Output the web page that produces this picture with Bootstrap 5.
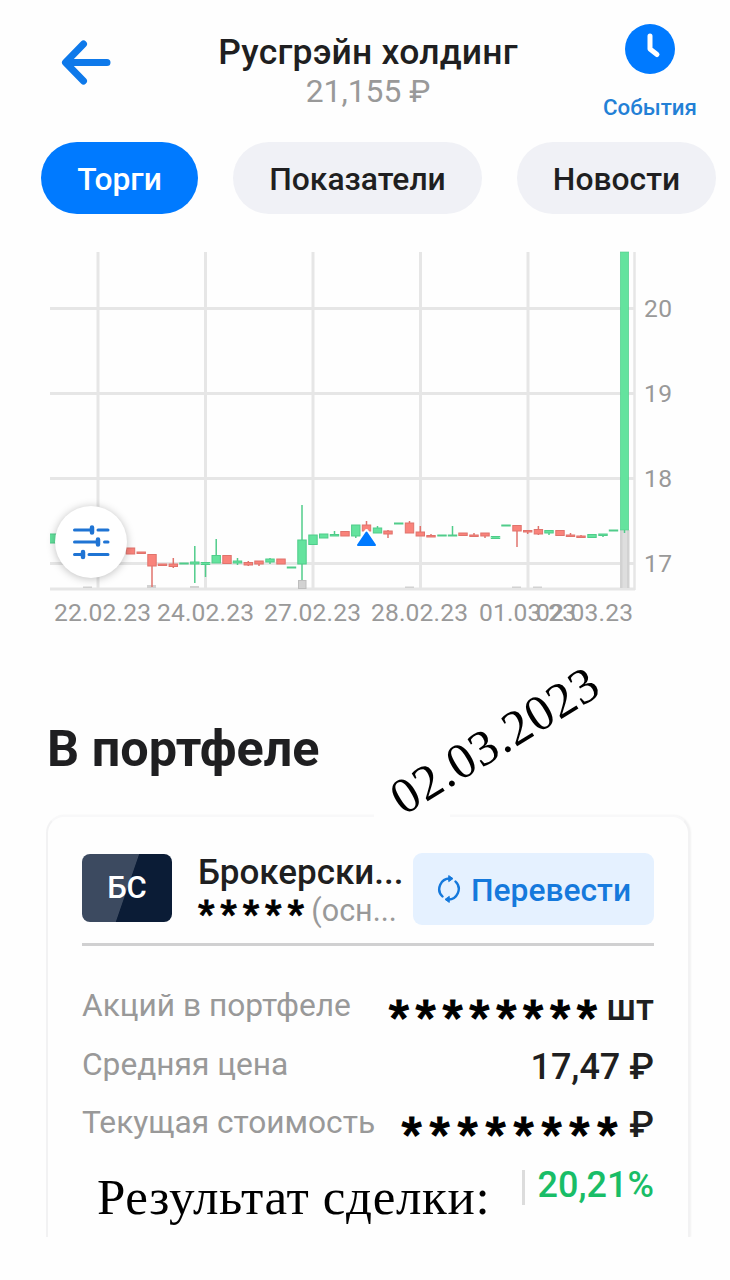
<!DOCTYPE html>
<html lang="ru">
<head>
<meta charset="utf-8">
<meta name="viewport" content="width=device-width, initial-scale=1">
<title>Русгрэйн холдинг</title>
<link href="https://cdn.jsdelivr.net/npm/bootstrap@5.3.0/dist/css/bootstrap.min.css" rel="stylesheet">
<style>
  body { font-family: Roboto, "Liberation Sans", sans-serif; color: #1f1f21; background: #fefefe; height: 1280px; overflow: hidden; }
  .topbar { height: 142px; padding: 0 33px 0 61px; }
  .back-icon { margin-top: 39px; width: 50px; height: 46px; }
  .heading-box { width: 320px; margin-top: 31px; margin-left: 22px; }
  .page-title { font-size: 35.5px; line-height: 42px; font-weight: 500; letter-spacing: .2px; }
  .page-price { font-size: 31.8px; line-height: 36px; color: #999; }
  .events { width: 94px; margin-top: 24px; color: #2380d6; }
  .events span { font-size: 22.3px; line-height: 28px; margin-top: 19px; font-weight: 500; }
  .tabs { padding-left: 41px; gap: 35px; height: 72px; }
  .pill { height: 72px; font-size: 31.8px; font-weight: 500; padding: 4px 0 0; background: #f0f1f6; color: #1f1f21; border: 0; }
  .pill.active { background: #007aff; color: #fff; }
  .pill-a { width: 157px; } .pill-b { width: 249px; } .pill-c { width: 199px; }
  .chart-box { margin: 36px 0 0 50px; width: 640px; height: 380px; }
  .filter-btn { left: 5px; top: 256px; width: 72px; height: 72px; box-shadow: 0 1px 8px rgba(0,0,0,.25); padding: 0; }
  .section-title { font-size: 50.4px; line-height: 60px; font-weight: 700; margin: 89px 0 0 47px; }
  .stamp { font-family: "Liberation Serif", serif; font-size: 50px; line-height: 51px; letter-spacing: 1px; color: #000; left: 375px; top: 715px; width: 240px; transform: rotate(-31.6deg); }
  .card-gap { left: 374px; top: 812px; width: 76px; height: 6px; background: #fefefe; }
  .holding { margin: 36px 40px 0 46px; height: 422px; border: 2px solid #f2f2f3; border-top-color: #f8f8f9; border-bottom: 0; border-radius: 18px 18px 0 0; box-shadow: 1px 0 2px rgba(0,0,0,.05); background: #fefefe; padding: 36px 34px 0 34px; clip-path: inset(-5px -5px 0 -5px); }
  .account { height: 93px; border-bottom: 3px solid #d0d0d1; }
  .logo { width: 90px; height: 68px; border-radius: 8px; margin-top: 1px; font-size: 31px; color: #fff; background: linear-gradient(109deg, #3c4a60 0 50%, #0b1c36 50.8%); font-weight: 500; }
  .acc-text { width: 215px; margin-left: 26px; }
  .acc-name { font-size: 35px; line-height: 40px; font-weight: 500; }
  .acc-sub { font-size: 30.5px; line-height: 36px; color: #999; }
  .stars { color: #000; font-weight: 700; font-size: 44px; line-height: 0; letter-spacing: 6.9px; vertical-align: -12px; margin-right: -6px; -webkit-text-stroke: 1.2px #000; stroke-linejoin: round; }
  .stars-wide { letter-spacing: 8px; margin-right: -5px; }
  .stars-small { font-size: 36px; letter-spacing: 6px; vertical-align: -5px; -webkit-text-stroke-width: .8px; }
  .transfer { width: 241px; height: 72px; border: 0; border-radius: 9px; background: #e5f1ff; color: #1579dc; font-size: 31.8px; font-weight: 500; padding: 0; gap: 9px; }
  .transfer span { padding-top: 3px; }
  .line { height: 58.5px; }
  .lines { padding-top: 31px; }
  .lbl { font-size: 31.7px; color: #999; }
  .val { font-size: 36px; font-weight: 500; padding-top: 4px; }
  .result { font-family: "Liberation Serif", serif; font-size: 51px; line-height: 60px; letter-spacing: .65px; color: #000; margin: 14px 0 0 15px; }
  .gain { color: #19bd67; font-size: 36px; line-height: 42px; font-weight: 500; margin-top: 11px; }
  .sep { width: 3px; height: 35px; background: #dcdcdc; margin: 17px 13px 0 auto; }
</style>
</head>
<body class="position-relative">
<header class="topbar d-flex justify-content-between align-items-start">
  <svg class="back-icon" viewBox="0 0 50 46" fill="none" stroke="#0e79ea" stroke-width="7" stroke-linecap="round" stroke-linejoin="round"><path d="M22.500 5L4.500 23.500L22.500 42M5 23.500H46"/></svg>
  <div class="heading-box text-center text-nowrap">
    <div class="page-title">Русгрэйн холдинг</div>
    <div class="page-price">21,155 ₽</div>
  </div>
  <div class="events d-flex flex-column align-items-center">
    <svg width="50" height="50" viewBox="0 0 50 50"><circle cx="25" cy="25" r="25" fill="#007aff"/><path d="M25 12V25L32 30.500" fill="none" stroke="#fff" stroke-width="5" stroke-linecap="round" stroke-linejoin="round"/></svg>
    <span>События</span>
  </div>
</header>
<nav class="tabs d-flex text-nowrap">
  <button class="btn rounded-pill pill pill-a active flex-shrink-0">Торги</button>
  <button class="btn rounded-pill pill pill-b flex-shrink-0">Показатели</button>
  <button class="btn rounded-pill pill pill-c flex-shrink-0">Новости</button>
</nav>
<section class="chart-box position-relative">
  <svg id="chart" class="d-block" width="640" height="380" viewBox="50 250 640 380" font-family="Roboto, sans-serif" font-size="24.600" fill="#999">
    <g stroke="#e6e6e6" stroke-width="3">
      <path d="M98 252V588M205.500 252V588M313 252V588M420.500 252V588M528 252V588M50 308.500H635M50 393.500H635M50 478.500H635M50 563.500H635M50 589H635"/>
      <path d="M634.500 252V590" stroke-width="2.500"/>
    </g>
    <g fill="#d2d2d2">
      <path d="M147 585h9v3h-9zM190 586h9v2h-9zM83 586.500h9v1.500h-9zM405 586.500h9v1.500h-9zM512 586.500h9v1.500h-9zM533 586.500h9v1.500h-9z"/>
      <rect x="298.500" y="580.500" width="7.500" height="8" stroke="#bebebe"/>
      <rect x="620" y="530" width="9.500" height="58"/><rect x="622.500" y="530" width="4.500" height="58" fill="#dedede"/>
    </g>
    <g id="candles"></g>
    <path d="M366.500 531L376 545.500H357Z" fill="#fff" stroke="#fff" stroke-width="4" stroke-linejoin="round"/>
    <path d="M366.500 532.500L375 545H358Z" fill="#007aff" stroke="#007aff" stroke-width="2" stroke-linejoin="round"/>
    <g>
      <text x="644" y="317" textLength="28">20</text><text x="644" y="402" textLength="28">19</text><text x="644" y="487" textLength="28">18</text><text x="644" y="572" textLength="28">17</text>
      <text x="54" y="621" textLength="97">22.02.23</text><text x="157" y="621" textLength="97">24.02.23</text><text x="264" y="621" textLength="97">27.02.23</text><text x="371" y="621" textLength="97">28.02.23</text><text x="479" y="621" textLength="97">01.03.23</text><text x="536" y="621" textLength="97">02.03.23</text>
    </g>
  </svg>
  <button class="filter-btn btn bg-white rounded-circle position-absolute d-flex align-items-center justify-content-center">
    <svg width="38" height="36" viewBox="0 0 38 36" fill="none" stroke="#1f74d4" stroke-width="3" stroke-linecap="round"><path d="M2.500 6H19M26 6H36M2.500 18H25M32.500 18H36M2.500 30.500H10M17 30.500H36"/><path d="M20 3.500V8.500M26 15.500V20.500M11 28V33" stroke-width="4.500"/></svg>
  </button>
</section>
<h2 class="section-title">В портфеле</h2>
<section class="holding">
  <div class="account d-flex align-items-start text-nowrap">
    <div class="logo d-flex align-items-center justify-content-center flex-shrink-0">БС</div>
    <div class="acc-text flex-shrink-0">
      <div class="acc-name">Брокерски...</div>
      <div class="acc-sub"><span class="stars stars-small">*****</span> (осн...</div>
    </div>
    <button class="btn transfer d-flex align-items-center justify-content-center flex-shrink-0">
      <svg width="26" height="28" viewBox="0 0 26 28" fill="none" stroke="#1579dc" stroke-width="2.400" stroke-linecap="round"><path d="M6.500 21.500A10.500 10.500 0 0 1 14.500 3.500M19.500 6.500A10.500 10.500 0 0 1 11.500 24.500"/><path d="M13 .8L17 3.600L13 6.400ZM13 21.600L9 24.400L13 27.200Z" fill="#1579dc" stroke-width="1"/></svg>
      <span>Перевести</span>
    </button>
  </div>
  <div class="lines text-nowrap">
    <div class="line d-flex justify-content-between align-items-center"><span class="lbl">Акций в портфеле</span><span class="val"><span class="stars">********</span> шт</span></div>
    <div class="line d-flex justify-content-between align-items-center"><span class="lbl">Средняя цена</span><span class="val">17,47 ₽</span></div>
    <div class="line d-flex justify-content-between align-items-center"><span class="lbl">Текущая стоимость</span><span class="val"><span class="stars stars-wide">********</span> ₽</span></div>
    <div class="d-flex align-items-start">
      <span class="result">Результат сделки:</span>
      <span class="sep"></span><span class="gain">20,21%</span>
    </div>
  </div>
</section>
<div class="card-gap position-absolute"></div>
<div class="stamp position-absolute text-center text-nowrap">02.03.2023</div>
<script src="https://cdn.jsdelivr.net/npm/bootstrap@5.3.0/dist/js/bootstrap.bundle.min.js"></script>
<script>
  // colour, centre x, body top, body bottom, wick top, wick bottom
  const data = [
    ['g',53,534,543],['r',130.5,548,554],['r',141.2,552,553.5],['r',152,554.5,566,554,587],['r',162.5,564,565.5],['r',173.3,564,566.5,558,568],['g',184,563,564],
    ['g',194.8,562,564,546,583],['g',205.5,562.5,564.5,562,577],['g',216.2,555.5,563,539,563],['r',227,555.5,563.5],['g',237.5,561,563,558,565],['r',248.3,562.5,565,561,566],
    ['r',259,561,564,561,566],['g',270,559,562,558,564],['r',281,559,564],['g',291.5,567,568],['g',302,540,564,505,580],['g',313,535,544.5],['g',323.7,534,538],
    ['g',334.5,534.5,536,531,536],['r',345,531.5,536],['g',355.8,525,536,525,538],['r',366.5,525,531,521,531],['g',377.5,528,533,526,533],['r',388,531,534,530,538],['g',398.7,523,524],
    ['r',409.5,523,533,521,533],['r',420.3,532,536,526,536],['r',431,535.5,537,534,537],['g',442,535,536],['g',452.5,535,536,526,536],['r',463,533,535.5],['r',474,535,536.5,533,536],
    ['r',485,533,536,533,538],['g',495.5,536.5,538.5],['g',506,525,526],['r',517,525.5,531,525,547],['r',527.7,530.5,532,530,534],['r',538.4,529.5,534,526,535],['g',549,530.5,533,530,535],
    ['r',560,530.5,535.5],['r',570.5,535,536.5,533,537],['r',581,536,537.5,535,538],['g',592,534.5,537.5],['g',603,534,535.5,534,537],['g',613.5,530,531],['g',624.5,252,530,252,533]
  ];
  const tone = { g: ['#64e39e', '#50cc8a'], r: ['#f9837b', '#e0736c'] };
  document.getElementById('candles').innerHTML = data.map(([c, x, a, b, t, w]) => {
    const [f, s] = tone[c];
    const wick = t ? `<path d="M${x} ${t}V${w}" stroke="${s}" stroke-width="1.5"/>` : '';
    return wick + `<rect x="${x - 4.2}" y="${a}" width="8.400" height="${b - a}" fill="${f}" stroke="${s}" stroke-width="${x > 620 ? .6 : 1}"/>`;
  }).join('');
</script>
</body>
</html>
